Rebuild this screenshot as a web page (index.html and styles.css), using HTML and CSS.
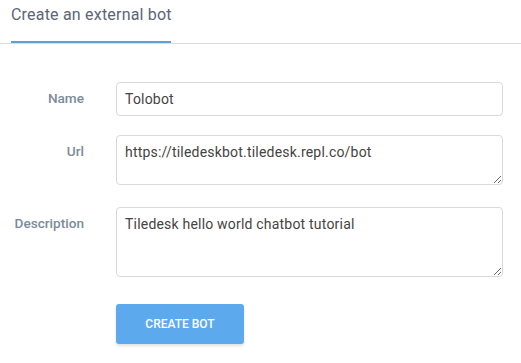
FILE: index.html
```html
<!DOCTYPE html>
<html lang="en">
<head>
    <meta charset="UTF-8">
    <meta name="viewport" content="width=device-width, initial-scale=1.0">
    <title>Create an external bot</title>
    <link rel="stylesheet" href="styles.css">
</head>
<body>
    <div class="tabs">
        <div class="tab active">Create an external bot</div>
    </div>

    <form class="bot-form">
        <div class="form-row">
            <label for="name">Name</label>
            <input type="text" id="name" value="Tolobot">
        </div>
        <div class="form-row">
            <label for="url">Url</label>
            <textarea id="url" class="url-box">https://tiledeskbot.tiledesk.repl.co/bot</textarea>
        </div>
        <div class="form-row">
            <label for="description">Description</label>
            <textarea id="description" class="desc-box">Tiledesk hello world chatbot tutorial</textarea>
        </div>
        <div class="form-row">
            <span></span>
            <div>
                <button type="button" class="btn-create">Create bot</button>
            </div>
        </div>
    </form>
</body>
</html>
```

FILE: styles.css
```css
body {
    margin: 0;
    font-family: Roboto, "Liberation Sans", Arial, sans-serif;
    background: #fff;
    color: #333;
}

.tabs {
    display: flex;
    border-bottom: 1px solid #dcdcdc;
    height: 43px;
}
.tab {
    margin-left: 11px;
    padding-top: 5px;
    width: 160px;
    font-size: 16px;
    color: #5b6578;
    letter-spacing: 0.2px;
    white-space: nowrap;
}
.tab.active {
    border-bottom: 2px solid #5ba1dc;
    height: 36px;
}

.bot-form {
    padding-top: 38px;
}
.form-row {
    display: grid;
    grid-template-columns: 84px 387px;
    column-gap: 32px;
    align-items: start;
    margin-bottom: 19px;
}
.form-row:nth-child(2) {
    margin-bottom: 22px;
}
.form-row:nth-child(3) {
    margin-bottom: 27px;
}
.form-row label {
    text-align: right;
    font-size: 13.6px;
    font-weight: 500;
    color: #7a8c9b;
    padding-top: 8px;
}
input, textarea {
    box-sizing: border-box;
    width: 100%;
    border: 1px solid #d9d9d9;
    border-radius: 4px;
    padding: 8px 8px;
    font-family: Roboto, "Liberation Sans", Arial, sans-serif;
    font-size: 14px;
    letter-spacing: 0.2px;
    color: #444;
    margin: 0;
    display: block;
}
input {
    height: 34px;
}
textarea {
    line-height: 17px;
    resize: vertical;
}
.url-box {
    height: 50px;
}
.desc-box {
    height: 70px;
}

.btn-create {
    width: 128px;
    height: 40px;
    border: none;
    border-radius: 3px;
    background-color: #5ca9ee;
    color: #fff;
    font-family: Roboto, "Liberation Sans", Arial, sans-serif;
    font-size: 12px;
    font-weight: 500;
    text-transform: uppercase;
    box-shadow: 0 2px 3px rgba(0, 0, 0, 0.12);
    cursor: pointer;
}
```
